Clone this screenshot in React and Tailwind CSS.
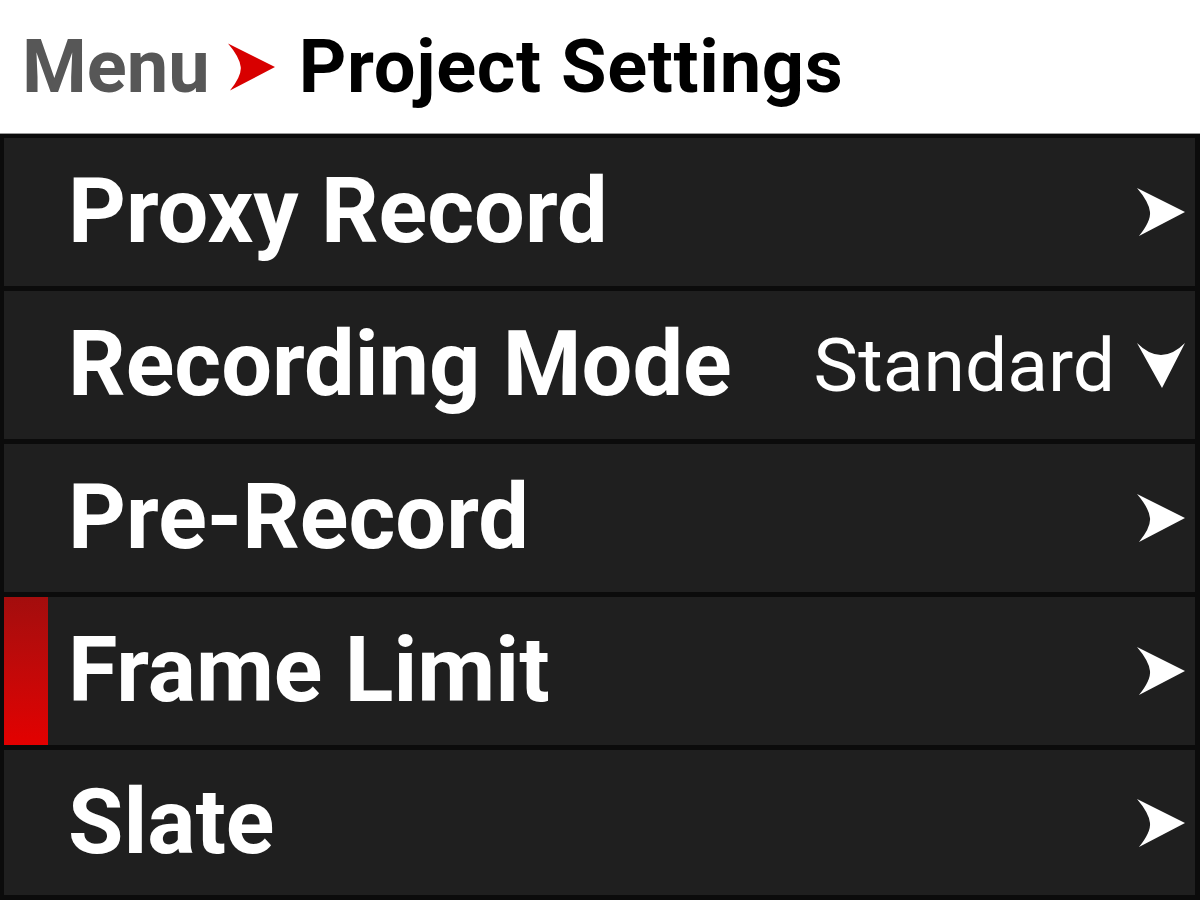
const rows = [
  { label: 'Proxy Record', type: 'link' },
  { label: 'Recording Mode', type: 'select', value: 'Standard' },
  { label: 'Pre-Record', type: 'link' },
  { label: 'Frame Limit', type: 'link', active: true },
  { label: 'Slate', type: 'link' },
];

function ArrowRight({ className = '' }) {
  return (
    <svg viewBox="0 0 48 50" className={className} fill="currentColor">
      <path d="M0 1 L48 25 L2 49 Q14 34 13 25 Q12 15 0 1 Z" />
    </svg>
  );
}

function Row({ row }) {
  return (
    <div className="relative flex flex-1 items-center bg-[#1f1f1f] pl-[64px] pr-[10px]">
      {row.active && (
        <div className="absolute left-0 top-0 bottom-0 w-[44px] bg-gradient-to-b from-[#a30d0d] to-[#e30000]" />
      )}
      <span className="flex-1 text-[90px] font-bold leading-none text-white">{row.label}</span>
      {row.type === 'select' ? (
        <div className="flex items-center gap-[22px]">
          <span className="text-[75px] leading-none text-white">{row.value}</span>
          <svg viewBox="0 0 48 45" className="w-[48px] h-[45px] text-white" fill="currentColor">
            <path d="M0 0 Q12 12 24 12 Q36 12 48 0 L25 45 Z" />
          </svg>
        </div>
      ) : (
        <ArrowRight className="w-[48px] h-[50px] text-white" />
      )}
    </div>
  );
}

export default function App() {
  return (
    <div className="flex flex-col h-[900px] w-[1200px] overflow-hidden bg-white font-['Roboto','Liberation_Sans',sans-serif]">
      <div className="flex h-[134px] items-center pl-[22px] border-b border-[#9a9a9a]">
        <span className="text-[74px] font-bold leading-none text-[#575757] tracking-[0px]">Menu</span>
        <ArrowRight className="ml-[18px] mr-[24px] w-[47px] h-[50px] text-[#d80000]" />
        <span className="text-[74px] font-bold leading-none text-black tracking-[0.7px]">Project Settings</span>
      </div>
      <div className="flex flex-1 flex-col gap-[5px] bg-[#0b0b0b] pt-[4px] pl-[4px] pr-[5px] pb-[5px]">
        {rows.map(row => (
          <div key={row.label} className={row.label === 'Slate' ? 'flex flex-1' : 'flex h-[148px]'}>
            <Row row={row} />
          </div>
        ))}
      </div>
    </div>
  );
}
